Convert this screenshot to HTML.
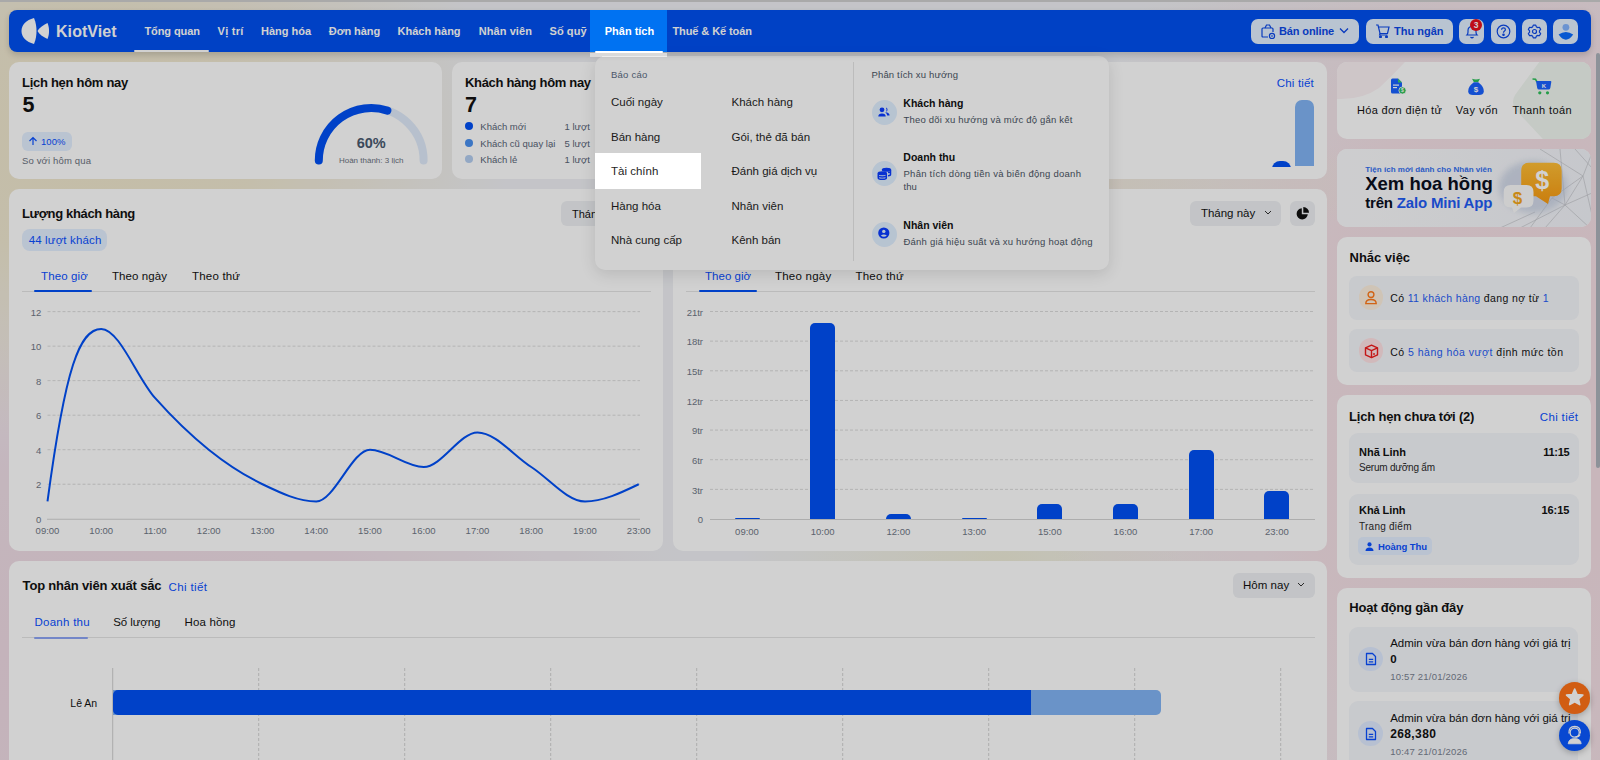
<!DOCTYPE html>
<html><head><meta charset="utf-8"><style>
html,body{margin:0;padding:0;width:1600px;height:760px;overflow:hidden}
body{position:relative;background:radial-gradient(ellipse 300px 60px at 1100px 184px, rgba(240,232,220,0.95) 0%, rgba(240,232,220,0) 100%),radial-gradient(ellipse 420px 300px at 90px 140px, rgba(240,231,205,1) 0%, rgba(240,231,205,0.9) 40%, rgba(240,231,205,0) 100%),radial-gradient(ellipse 650px 420px at 60px 680px, rgba(240,218,228,1) 0%, rgba(240,218,228,0.8) 50%, rgba(240,218,228,0) 100%),radial-gradient(ellipse 520px 700px at 1560px 420px, rgba(245,222,228,1) 0%, rgba(245,222,228,0.85) 50%, rgba(245,222,228,0) 100%),radial-gradient(ellipse 260px 120px at 1000px 560px, rgba(238,236,214,0.9) 0%, rgba(238,236,214,0) 100%),linear-gradient(90deg,#eff0f4,#eff0f4);font-family:"Liberation Sans",sans-serif}
.t{position:absolute;white-space:nowrap;line-height:1}
.top{position:absolute;left:0;top:0;z-index:60}
</style></head><body>
<div style="position:absolute;left:0px;top:0px;width:1600px;height:1.5px;background:#cfcfcf;border-radius:0px;"></div>
<div style="position:absolute;left:9px;top:10px;width:1582px;height:42px;background:#0050f1;border-radius:8px;"></div>
<svg style="position:absolute;left:20px;top:17px" width="30" height="28" viewBox="0 0 30 28"><path d="M14 1 C6 3 1.5 8 1.5 14 C1.5 20 6 25 14 27 C16 22 16.5 18 16.5 14 C16.5 10 16 6 14 1 Z" fill="#fff"/><path d="M27.5 6 C23 8 19 11 17.5 14 C19 17 23 20 27.5 22 C28.8 19 29 16.5 29 14 C29 11.5 28.8 9 27.5 6 Z" fill="#fff"/></svg>
<div class="t" style="left:56px;top:24.16px;font-size:16px;font-weight:700;color:#fff;letter-spacing:0.063px;">KiotViet</div>
<div class="t" style="left:144.5px;top:26.39px;font-size:11px;font-weight:700;color:#fff;letter-spacing:-0.102px;">Tổng quan</div>
<div class="t" style="left:217.5px;top:26.39px;font-size:11px;font-weight:700;color:#fff;letter-spacing:0.289px;">Vị trí</div>
<div class="t" style="left:261px;top:26.39px;font-size:11px;font-weight:700;color:#fff;letter-spacing:-0.004px;">Hàng hóa</div>
<div class="t" style="left:328.8px;top:26.39px;font-size:11px;font-weight:700;color:#fff;letter-spacing:-0.061px;">Đơn hàng</div>
<div class="t" style="left:397.5px;top:26.39px;font-size:11px;font-weight:700;color:#fff;letter-spacing:0.016px;">Khách hàng</div>
<div class="t" style="left:478.8px;top:26.39px;font-size:11px;font-weight:700;color:#fff;letter-spacing:0.065px;">Nhân viên</div>
<div class="t" style="left:549.5px;top:26.39px;font-size:11px;font-weight:700;color:#fff;letter-spacing:0.086px;">Số quỹ</div>
<div class="t" style="left:672.5px;top:26.39px;font-size:11px;font-weight:700;color:#fff;letter-spacing:-0.098px;">Thuế &amp; Kế toán</div>
<div style="position:absolute;left:134px;top:50px;width:75px;height:2px;background:#fff;border-radius:1px;"></div>
<div style="position:absolute;left:9px;top:62px;width:433px;height:117px;background:#ffffff;border-radius:10px;"></div>
<div style="position:absolute;left:452px;top:62px;width:875px;height:117px;background:#ffffff;border-radius:10px;"></div>
<div style="position:absolute;left:9px;top:189px;width:654px;height:362px;background:#ffffff;border-radius:10px;"></div>
<div style="position:absolute;left:673px;top:189px;width:654px;height:362px;background:#ffffff;border-radius:10px;"></div>
<div style="position:absolute;left:9px;top:561px;width:1318px;height:220px;background:#ffffff;border-radius:10px;"></div>
<div style="position:absolute;left:1337px;top:62px;width:254px;height:77px;background:#ffffff;border-radius:10px;"></div>
<div style="position:absolute;left:1337px;top:149px;width:254px;height:78px;background:#ffffff;border-radius:10px;"></div>
<div style="position:absolute;left:1337px;top:237px;width:254px;height:148px;background:#ffffff;border-radius:10px;"></div>
<div style="position:absolute;left:1337px;top:395px;width:254px;height:183px;background:#ffffff;border-radius:10px;"></div>
<div style="position:absolute;left:1337px;top:588px;width:254px;height:200px;background:#ffffff;border-radius:10px;"></div>
<div style="position:absolute;left:1251px;top:19px;width:108px;height:25px;background:#e2efff;border-radius:7px;"></div>
<svg style="position:absolute;left:1260px;top:24px" width="16" height="15" viewBox="0 0 16 15" fill="none" stroke="#0b48e8" stroke-width="1.2"><path d="M5 4 L6.5 1 L9.5 1 L11 4"/><path d="M8 13 H3 Q2 13 2 12 V5 Q2 4 3 4 H12 Q13 4 13 5 V8"/><circle cx="12" cy="12" r="2.6"/><path d="M11 12 h2"/></svg>
<div class="t" style="left:1279px;top:25.99px;font-size:11px;font-weight:700;color:#0b48e8;letter-spacing:-0.126px;">Bán online</div>
<svg style="position:absolute;left:1339px;top:27px" width="10" height="7" viewBox="0 0 10 7" fill="none" stroke="#0b48e8" stroke-width="1.3"><path d="M1 1.5 L5 5.5 L9 1.5"/></svg>
<div style="position:absolute;left:1366px;top:19px;width:87px;height:25px;background:#e2efff;border-radius:7px;"></div>
<svg style="position:absolute;left:1375px;top:24px" width="15" height="14" viewBox="0 0 15 14" fill="none" stroke="#0b48e8" stroke-width="1.2"><path d="M1 1 H3 L5 9.5 H12.5 L14 3 H3.6"/><path d="M5 9.5 L4.6 11 H12.5"/><circle cx="5.5" cy="12.8" r="0.9" fill="#0b48e8"/><circle cx="11.5" cy="12.8" r="0.9" fill="#0b48e8"/></svg>
<div class="t" style="left:1394px;top:25.99px;font-size:11px;font-weight:700;color:#0b48e8;letter-spacing:0.014px;">Thu ngân</div>
<div style="position:absolute;left:1459px;top:19px;width:25px;height:25px;background:#e2efff;border-radius:7px;"></div>
<div style="position:absolute;left:1491px;top:19px;width:25px;height:25px;background:#e2efff;border-radius:7px;"></div>
<div style="position:absolute;left:1522px;top:19px;width:25px;height:25px;background:#e2efff;border-radius:7px;"></div>
<div style="position:absolute;left:1553px;top:19px;width:25px;height:25px;background:#e2efff;border-radius:7px;"></div>
<svg style="position:absolute;left:1465px;top:24px" width="14" height="15" viewBox="0 0 14 15" fill="none" stroke="#0b48e8" stroke-width="1.2"><path d="M2 11 Q3 10 3 8 V6.5 Q3 2.5 7 2.5 Q11 2.5 11 6.5 V8 Q11 10 12 11 Z"/><path d="M5.5 13 Q7 14.5 8.5 13"/></svg>
<div style="position:absolute;left:1470px;top:19px;width:12px;height:12px;background:#e8101c;border-radius:6px;"><div style="position:absolute;left:0;top:1.5px;width:12px;text-align:center;font-size:8.5px;font-weight:700;color:#fff;line-height:9px">3</div></div>
<svg style="position:absolute;left:1496px;top:24px" width="15" height="15" viewBox="0 0 15 15" fill="none" stroke="#0b48e8" stroke-width="1.2"><circle cx="7.5" cy="7.5" r="6.3"/><path d="M5.6 5.8 Q5.6 3.9 7.5 3.9 Q9.4 3.9 9.4 5.6 Q9.4 6.6 8.3 7.2 Q7.5 7.7 7.5 8.8"/><circle cx="7.5" cy="10.8" r="0.7" fill="#0b48e8"/></svg>
<svg style="position:absolute;left:1527px;top:24px" width="15" height="15" viewBox="0 0 15 15" fill="none" stroke="#0b48e8" stroke-width="1.2" stroke-linejoin="round"><path d="M12.45 8.20 L13.65 9.62 L12.41 11.76 L10.58 11.44 L9.37 12.14 L8.74 13.88 L6.26 13.88 L5.63 12.14 L4.42 11.44 L2.59 11.76 L1.35 9.62 L2.55 8.20 L2.55 6.80 L1.35 5.38 L2.59 3.24 L4.42 3.56 L5.63 2.86 L6.26 1.12 L8.74 1.12 L9.37 2.86 L10.58 3.56 L12.41 3.24 L13.65 5.38 L12.45 6.80Z"/><circle cx="7.5" cy="7.5" r="2"/></svg>
<svg style="position:absolute;left:1553px;top:19px" width="25" height="25" viewBox="0 0 25 25"><circle cx="12.9" cy="8.3" r="3.4" fill="#82b4ff"/><path d="M5.6 15.6 Q12.9 10.2 20.2 15.6 Q16.5 20.8 12.9 20.8 Q9.3 20.8 5.6 15.6Z" fill="#0a6cff"/></svg>
<div class="t" style="left:22px;top:76.20px;font-size:13px;font-weight:700;color:#121212;letter-spacing:-0.281px;">Lịch hẹn hôm nay</div>
<div class="t" style="left:22.5px;top:95.10px;font-size:21.5px;font-weight:700;color:#121212;">5</div>
<div style="position:absolute;left:22px;top:132px;width:50px;height:19px;background:#e3efff;border-radius:6px;"></div>
<svg style="position:absolute;left:28px;top:136px" width="10" height="10" viewBox="0 0 10 10" fill="none" stroke="#0a50ff" stroke-width="1.2"><path d="M5 9 V1.5 M1.5 5 L5 1.5 L8.5 5"/></svg>
<div class="t" style="left:41px;top:136.56px;font-size:9.5px;font-weight:400;color:#0a50ff;letter-spacing:0.046px;">100%</div>
<div class="t" style="left:22px;top:155.66px;font-size:9.5px;font-weight:400;color:#6b7280;letter-spacing:0.152px;">So với hôm qua</div>
<svg style="position:absolute;left:0;top:0" width="450" height="180"><path d="M318.80 160.50 A52.4 52.4 0 0 1 423.60 160.50" fill="none" stroke="#e0ebfa" stroke-width="8" stroke-linecap="round"/><path d="M318.80 160.50 A52.4 52.4 0 0 1 387.39 110.66" fill="none" stroke="#0050f5" stroke-width="8" stroke-linecap="round"/></svg>
<div class="t" style="left:71.19999999999999px;width:600px;text-align:center;top:135.93px;font-size:14.5px;font-weight:700;color:#4a5a70;">60%</div>
<div class="t" style="left:71.19999999999999px;width:600px;text-align:center;top:156.93px;font-size:8px;font-weight:400;color:#6b7280;">Hoàn thành: 3 lịch</div>
<div class="t" style="left:465px;top:75.90px;font-size:13px;font-weight:700;color:#121212;letter-spacing:-0.316px;">Khách hàng hôm nay</div>
<div class="t" style="left:465px;top:94.50px;font-size:21.5px;font-weight:700;color:#121212;">7</div>
<div style="position:absolute;left:464.6px;top:122px;width:8px;height:8px;background:#0050f5;border-radius:4px;"></div>
<div class="t" style="left:480.3px;top:121.96px;font-size:9.5px;font-weight:400;color:#596577;">Khách mới</div>
<div class="t" style="right:1010.2px;top:121.96px;font-size:9.5px;font-weight:400;color:#596577;">1 lượt</div>
<div style="position:absolute;left:464.6px;top:138.6px;width:8px;height:8px;background:#4a90f0;border-radius:4px;"></div>
<div class="t" style="left:480.3px;top:138.56px;font-size:9.5px;font-weight:400;color:#596577;">Khách cũ quay lại</div>
<div class="t" style="right:1010.2px;top:138.56px;font-size:9.5px;font-weight:400;color:#596577;">5 lượt</div>
<div style="position:absolute;left:464.6px;top:155.2px;width:8px;height:8px;background:#b4cdf0;border-radius:4px;"></div>
<div class="t" style="left:480.3px;top:155.16px;font-size:9.5px;font-weight:400;color:#596577;">Khách lẻ</div>
<div class="t" style="right:1010.2px;top:155.16px;font-size:9.5px;font-weight:400;color:#596577;">1 lượt</div>
<div class="t" style="right:286px;top:78.47px;font-size:11.5px;font-weight:400;color:#0a50ff;letter-spacing:0.193px;">Chi tiết</div>
<div style="position:absolute;left:1272.3px;top:161px;width:19px;height:8px;background:#0050f5;border-radius:9px 9px 0 0;"></div>
<div style="position:absolute;left:1294.5px;top:99.8px;width:19px;height:66.7px;background:#82b4f4;border-radius:7px 7px 0 0;"></div>
<div style="position:absolute;left:1260px;top:166.5px;width:60px;height:6px;background:#ffffff;border-radius:0px;"></div>
<div class="t" style="left:22px;top:206.70px;font-size:13px;font-weight:700;color:#121212;letter-spacing:-0.335px;">Lượng khách hàng</div>
<div style="position:absolute;left:22px;top:229px;width:85px;height:22px;background:#e3efff;border-radius:8px;"></div>
<div class="t" style="left:28.7px;top:235.17px;font-size:11.5px;font-weight:400;color:#0a50ff;letter-spacing:0.149px;">44 lượt khách</div>
<div class="t" style="left:41px;top:271.17px;font-size:11.5px;font-weight:400;color:#0a50ff;letter-spacing:0.135px;">Theo giờ</div>
<div class="t" style="left:111.9px;top:271.17px;font-size:11.5px;font-weight:400;color:#121212;letter-spacing:0.099px;">Theo ngày</div>
<div class="t" style="left:192.1px;top:271.17px;font-size:11.5px;font-weight:400;color:#121212;letter-spacing:0.178px;">Theo thứ</div>
<div style="position:absolute;left:22px;top:291px;width:629px;height:1px;background:#e4e4e4;border-radius:0px;"></div>
<div style="position:absolute;left:34px;top:290px;width:58px;height:2px;background:#0050f5;border-radius:1px;"></div>
<div style="position:absolute;left:561px;top:201px;width:91px;height:25px;background:#eef0f3;border-radius:6px;"></div>
<div class="t" style="left:572px;top:208.89px;font-size:11px;font-weight:400;color:#121212;">Tháng này</div>
<svg style="position:absolute;left:0;top:0" width="670" height="560"><line x1="47.5" y1="484.23" x2="640" y2="484.23" stroke="#dcdcdc" stroke-width="1" stroke-dasharray="3 2"/><line x1="47.5" y1="449.71" x2="640" y2="449.71" stroke="#dcdcdc" stroke-width="1" stroke-dasharray="3 2"/><line x1="47.5" y1="415.19" x2="640" y2="415.19" stroke="#dcdcdc" stroke-width="1" stroke-dasharray="3 2"/><line x1="47.5" y1="380.67" x2="640" y2="380.67" stroke="#dcdcdc" stroke-width="1" stroke-dasharray="3 2"/><line x1="47.5" y1="346.15" x2="640" y2="346.15" stroke="#dcdcdc" stroke-width="1" stroke-dasharray="3 2"/><line x1="47.5" y1="311.63" x2="640" y2="311.63" stroke="#dcdcdc" stroke-width="1" stroke-dasharray="3 2"/><line x1="47" y1="519.25" x2="640" y2="519.25" stroke="#d4d4d4" stroke-width="1"/><path d="M47.50 501.49 C65.42 367.12 79.75 328.89 101.25 328.89 C119.17 328.89 137.08 377.79 155.00 397.93 C172.92 418.07 190.83 435.33 208.75 449.71 C226.67 464.09 244.58 475.60 262.50 484.23 C280.42 492.86 298.33 501.49 316.25 501.49 C334.17 501.49 352.08 449.71 370.00 449.71 C387.92 449.71 405.83 466.97 423.75 466.97 C441.67 466.97 459.58 432.45 477.50 432.45 C495.42 432.45 513.33 455.46 531.25 466.97 C549.17 478.48 567.08 501.49 585.00 501.49 C602.92 501.49 620.83 492.86 638.75 484.23" fill="none" stroke="#0050f5" stroke-width="2"/></svg>
<div class="t" style="right:1558.8px;top:514.91px;font-size:9.5px;font-weight:400;color:#707886;">0</div>
<div class="t" style="right:1558.8px;top:480.39px;font-size:9.5px;font-weight:400;color:#707886;">2</div>
<div class="t" style="right:1558.8px;top:445.87px;font-size:9.5px;font-weight:400;color:#707886;">4</div>
<div class="t" style="right:1558.8px;top:411.35px;font-size:9.5px;font-weight:400;color:#707886;">6</div>
<div class="t" style="right:1558.8px;top:376.83px;font-size:9.5px;font-weight:400;color:#707886;">8</div>
<div class="t" style="right:1558.8px;top:342.31px;font-size:9.5px;font-weight:400;color:#707886;">10</div>
<div class="t" style="right:1558.8px;top:307.79px;font-size:9.5px;font-weight:400;color:#707886;">12</div>
<div class="t" style="left:-252.5px;width:600px;text-align:center;top:526.46px;font-size:9.5px;font-weight:400;color:#707886;">09:00</div>
<div class="t" style="left:-198.75px;width:600px;text-align:center;top:526.46px;font-size:9.5px;font-weight:400;color:#707886;">10:00</div>
<div class="t" style="left:-145.0px;width:600px;text-align:center;top:526.46px;font-size:9.5px;font-weight:400;color:#707886;">11:00</div>
<div class="t" style="left:-91.25px;width:600px;text-align:center;top:526.46px;font-size:9.5px;font-weight:400;color:#707886;">12:00</div>
<div class="t" style="left:-37.5px;width:600px;text-align:center;top:526.46px;font-size:9.5px;font-weight:400;color:#707886;">13:00</div>
<div class="t" style="left:16.25px;width:600px;text-align:center;top:526.46px;font-size:9.5px;font-weight:400;color:#707886;">14:00</div>
<div class="t" style="left:70.0px;width:600px;text-align:center;top:526.46px;font-size:9.5px;font-weight:400;color:#707886;">15:00</div>
<div class="t" style="left:123.75px;width:600px;text-align:center;top:526.46px;font-size:9.5px;font-weight:400;color:#707886;">16:00</div>
<div class="t" style="left:177.5px;width:600px;text-align:center;top:526.46px;font-size:9.5px;font-weight:400;color:#707886;">17:00</div>
<div class="t" style="left:231.25px;width:600px;text-align:center;top:526.46px;font-size:9.5px;font-weight:400;color:#707886;">18:00</div>
<div class="t" style="left:285.0px;width:600px;text-align:center;top:526.46px;font-size:9.5px;font-weight:400;color:#707886;">19:00</div>
<div class="t" style="left:338.75px;width:600px;text-align:center;top:526.46px;font-size:9.5px;font-weight:400;color:#707886;">23:00</div>
<div style="position:absolute;left:1190px;top:201px;width:91px;height:25px;background:#eef0f3;border-radius:6px;"></div>
<div class="t" style="left:1201px;top:208.47px;font-size:11.5px;font-weight:400;color:#121212;letter-spacing:-0.026px;">Tháng này</div>
<svg style="position:absolute;left:1264px;top:210px" width="8" height="6" viewBox="0 0 8 6" fill="none" stroke="#333" stroke-width="1"><path d="M1 1 L4 4 L7 1"/></svg>
<div style="position:absolute;left:1290px;top:201px;width:25px;height:25px;background:#eef0f3;border-radius:6px;"></div>
<svg style="position:absolute;left:1295px;top:206px" width="15" height="15" viewBox="0 0 15 15"><path d="M6.8 2.2 A5.6 5.6 0 1 0 12.8 8.2 H6.8 Z" fill="#111"/><path d="M8.3 1 A5.6 5.6 0 0 1 14 6.7 H8.3 Z" fill="#111"/></svg>
<div class="t" style="left:705px;top:271.17px;font-size:11.5px;font-weight:400;color:#0a50ff;letter-spacing:0.035px;">Theo giờ</div>
<div class="t" style="left:775px;top:271.17px;font-size:11.5px;font-weight:400;color:#121212;letter-spacing:0.224px;">Theo ngày</div>
<div class="t" style="left:855.5px;top:271.17px;font-size:11.5px;font-weight:400;color:#121212;letter-spacing:0.207px;">Theo thứ</div>
<div style="position:absolute;left:686px;top:291px;width:629px;height:1px;background:#e4e4e4;border-radius:0px;"></div>
<div style="position:absolute;left:698.5px;top:290px;width:58px;height:2px;background:#0050f5;border-radius:1px;"></div>
<svg style="position:absolute;left:0;top:0" width="1340" height="560"><line x1="710" y1="489.36" x2="1315" y2="489.36" stroke="#dcdcdc" stroke-width="1" stroke-dasharray="3 2"/><line x1="710" y1="459.71" x2="1315" y2="459.71" stroke="#dcdcdc" stroke-width="1" stroke-dasharray="3 2"/><line x1="710" y1="430.07" x2="1315" y2="430.07" stroke="#dcdcdc" stroke-width="1" stroke-dasharray="3 2"/><line x1="710" y1="400.43" x2="1315" y2="400.43" stroke="#dcdcdc" stroke-width="1" stroke-dasharray="3 2"/><line x1="710" y1="370.79" x2="1315" y2="370.79" stroke="#dcdcdc" stroke-width="1" stroke-dasharray="3 2"/><line x1="710" y1="341.14" x2="1315" y2="341.14" stroke="#dcdcdc" stroke-width="1" stroke-dasharray="3 2"/><line x1="710" y1="311.50" x2="1315" y2="311.50" stroke="#dcdcdc" stroke-width="1" stroke-dasharray="3 2"/><line x1="710" y1="519.5" x2="1315" y2="519.5" stroke="#d4d4d4" stroke-width="1"/></svg>
<div style="position:absolute;left:734.5px;top:517.8px;width:25px;height:1.5px;background:#0050f5;border-radius:1px 1px 0 0;"></div>
<div style="position:absolute;left:810.2px;top:322.5px;width:25px;height:196.79999999999995px;background:#0050f5;border-radius:5px 5px 0 0;"></div>
<div style="position:absolute;left:885.9px;top:513.5px;width:25px;height:5.7999999999999545px;background:#0050f5;border-radius:5px 5px 0 0;"></div>
<div style="position:absolute;left:961.6px;top:517.8px;width:25px;height:1.5px;background:#0050f5;border-radius:1px 1px 0 0;"></div>
<div style="position:absolute;left:1037.3px;top:504px;width:25px;height:15.299999999999955px;background:#0050f5;border-radius:5px 5px 0 0;"></div>
<div style="position:absolute;left:1113.0px;top:504px;width:25px;height:15.299999999999955px;background:#0050f5;border-radius:5px 5px 0 0;"></div>
<div style="position:absolute;left:1188.7px;top:449.5px;width:25px;height:69.79999999999995px;background:#0050f5;border-radius:5px 5px 0 0;"></div>
<div style="position:absolute;left:1264.4px;top:491px;width:25px;height:28.299999999999955px;background:#0050f5;border-radius:5px 5px 0 0;"></div>
<div class="t" style="right:897px;top:515.16px;font-size:9.5px;font-weight:400;color:#707886;">0</div>
<div class="t" style="right:897px;top:485.52px;font-size:9.5px;font-weight:400;color:#707886;">3tr</div>
<div class="t" style="right:897px;top:455.87px;font-size:9.5px;font-weight:400;color:#707886;">6tr</div>
<div class="t" style="right:897px;top:426.23px;font-size:9.5px;font-weight:400;color:#707886;">9tr</div>
<div class="t" style="right:897px;top:396.59px;font-size:9.5px;font-weight:400;color:#707886;">12tr</div>
<div class="t" style="right:897px;top:366.94px;font-size:9.5px;font-weight:400;color:#707886;">15tr</div>
<div class="t" style="right:897px;top:337.30px;font-size:9.5px;font-weight:400;color:#707886;">18tr</div>
<div class="t" style="right:897px;top:307.66px;font-size:9.5px;font-weight:400;color:#707886;">21tr</div>
<div class="t" style="left:447.0px;width:600px;text-align:center;top:526.66px;font-size:9.5px;font-weight:400;color:#707886;">09:00</div>
<div class="t" style="left:522.7px;width:600px;text-align:center;top:526.66px;font-size:9.5px;font-weight:400;color:#707886;">10:00</div>
<div class="t" style="left:598.4px;width:600px;text-align:center;top:526.66px;font-size:9.5px;font-weight:400;color:#707886;">12:00</div>
<div class="t" style="left:674.1px;width:600px;text-align:center;top:526.66px;font-size:9.5px;font-weight:400;color:#707886;">13:00</div>
<div class="t" style="left:749.8px;width:600px;text-align:center;top:526.66px;font-size:9.5px;font-weight:400;color:#707886;">15:00</div>
<div class="t" style="left:825.5px;width:600px;text-align:center;top:526.66px;font-size:9.5px;font-weight:400;color:#707886;">16:00</div>
<div class="t" style="left:901.2px;width:600px;text-align:center;top:526.66px;font-size:9.5px;font-weight:400;color:#707886;">17:00</div>
<div class="t" style="left:976.9000000000001px;width:600px;text-align:center;top:526.66px;font-size:9.5px;font-weight:400;color:#707886;">23:00</div>
<div class="t" style="left:22.6px;top:578.70px;font-size:13px;font-weight:700;color:#121212;letter-spacing:-0.186px;">Top nhân viên xuất sắc</div>
<div class="t" style="left:168.5px;top:581.97px;font-size:11.5px;font-weight:400;color:#0a50ff;letter-spacing:0.379px;">Chi tiết</div>
<div class="t" style="left:34.5px;top:617.47px;font-size:11.5px;font-weight:400;color:#0a50ff;letter-spacing:0.259px;">Doanh thu</div>
<div class="t" style="left:113.3px;top:617.47px;font-size:11.5px;font-weight:400;color:#121212;letter-spacing:-0.101px;">Số lượng</div>
<div class="t" style="left:184.5px;top:617.47px;font-size:11.5px;font-weight:400;color:#121212;letter-spacing:0.154px;">Hoa hồng</div>
<div style="position:absolute;left:22px;top:637px;width:1293px;height:1px;background:#e4e4e4;border-radius:0px;"></div>
<div style="position:absolute;left:34px;top:636.5px;width:54px;height:2px;background:#8da4f5;border-radius:1px;"></div>
<div style="position:absolute;left:1233px;top:573px;width:81.5px;height:25px;background:#eef0f3;border-radius:6px;"></div>
<div class="t" style="left:1243px;top:580.47px;font-size:11.5px;font-weight:400;color:#121212;letter-spacing:0.020px;">Hôm nay</div>
<svg style="position:absolute;left:1297px;top:582px" width="8" height="6" viewBox="0 0 8 6" fill="none" stroke="#333" stroke-width="1"><path d="M1 1 L4 4 L7 1"/></svg>
<svg style="position:absolute;left:0;top:0" width="1340" height="760"><line x1="112.7" y1="668" x2="112.7" y2="760" stroke="#d0d0d0" stroke-width="1"/><line x1="258.7" y1="668" x2="258.7" y2="760" stroke="#d4d4d4" stroke-width="1" stroke-dasharray="3 2"/><line x1="404.7" y1="668" x2="404.7" y2="760" stroke="#d4d4d4" stroke-width="1" stroke-dasharray="3 2"/><line x1="550.7" y1="668" x2="550.7" y2="760" stroke="#d4d4d4" stroke-width="1" stroke-dasharray="3 2"/><line x1="696.7" y1="668" x2="696.7" y2="760" stroke="#d4d4d4" stroke-width="1" stroke-dasharray="3 2"/><line x1="842.7" y1="668" x2="842.7" y2="760" stroke="#d4d4d4" stroke-width="1" stroke-dasharray="3 2"/><line x1="988.7" y1="668" x2="988.7" y2="760" stroke="#d4d4d4" stroke-width="1" stroke-dasharray="3 2"/><line x1="1134.7" y1="668" x2="1134.7" y2="760" stroke="#d4d4d4" stroke-width="1" stroke-dasharray="3 2"/><line x1="1280.7" y1="668" x2="1280.7" y2="760" stroke="#d4d4d4" stroke-width="1" stroke-dasharray="3 2"/></svg>
<div class="t" style="right:1502.8px;top:697.61px;font-size:10.5px;font-weight:400;color:#121212;">Lê An</div>
<div style="position:absolute;left:113px;top:690.3px;width:1048px;height:25px;background:#82b4f4;border-radius:0 5px 5px 0;"></div>
<div style="position:absolute;left:113px;top:690.3px;width:918px;height:25px;background:#0050f5;border-radius:5px 0 0 5px;"></div>
<div style="position:absolute;left:595px;top:56px;width:514px;height:214px;background:#ffffff;border-radius:10px;box-shadow:0 4px 16px rgba(0,0,0,0.12)"></div>
<div class="t" style="left:611px;top:70.46px;font-size:9.5px;font-weight:400;color:#5b6b82;letter-spacing:0.229px;">Báo cáo</div>
<div class="t" style="left:611px;top:97.37px;font-size:11.5px;font-weight:400;color:#1f1f1f;">Cuối ngày</div>
<div class="t" style="left:731.5px;top:97.37px;font-size:11.5px;font-weight:400;color:#1f1f1f;">Khách hàng</div>
<div class="t" style="left:611px;top:131.77px;font-size:11.5px;font-weight:400;color:#1f1f1f;">Bán hàng</div>
<div class="t" style="left:731.5px;top:131.77px;font-size:11.5px;font-weight:400;color:#1f1f1f;">Gói, thẻ đã bán</div>
<div class="t" style="left:731.5px;top:166.17px;font-size:11.5px;font-weight:400;color:#1f1f1f;">Đánh giá dịch vụ</div>
<div class="t" style="left:611px;top:200.57px;font-size:11.5px;font-weight:400;color:#1f1f1f;">Hàng hóa</div>
<div class="t" style="left:731.5px;top:200.57px;font-size:11.5px;font-weight:400;color:#1f1f1f;">Nhân viên</div>
<div class="t" style="left:611px;top:234.97px;font-size:11.5px;font-weight:400;color:#1f1f1f;">Nhà cung cấp</div>
<div class="t" style="left:731.5px;top:234.97px;font-size:11.5px;font-weight:400;color:#1f1f1f;">Kênh bán</div>
<div style="position:absolute;left:852.5px;top:62px;width:1px;height:199px;background:#e6e6e6;border-radius:0px;"></div>
<div class="t" style="left:871.5px;top:69.96px;font-size:9.5px;font-weight:400;color:#4b5565;letter-spacing:0.156px;">Phân tích xu hướng</div>
<div style="position:absolute;left:872px;top:100.1px;width:24.8px;height:24.8px;background:#e0efff;border-radius:12.4px;"></div>
<div class="t" style="left:903.3px;top:97.81px;font-size:10.5px;font-weight:700;color:#121212;">Khách hàng</div>
<div class="t" style="left:903.5px;top:115.06px;font-size:9.5px;font-weight:400;color:#4b5565;letter-spacing:0.202px;">Theo dõi xu hướng và mức độ gắn kết</div>
<div style="position:absolute;left:872px;top:160.9px;width:24.8px;height:24.8px;background:#e0efff;border-radius:12.4px;"></div>
<div class="t" style="left:903.3px;top:151.81px;font-size:10.5px;font-weight:700;color:#121212;">Doanh thu</div>
<div class="t" style="left:903.5px;top:169.06px;font-size:9.5px;font-weight:400;color:#4b5565;letter-spacing:0.256px;">Phân tích dòng tiền và biến động doanh</div>
<div class="t" style="left:903.5px;top:181.86px;font-size:9.5px;font-weight:400;color:#4b5565;">thu</div>
<div style="position:absolute;left:872px;top:222.4px;width:24.8px;height:24.8px;background:#e0efff;border-radius:12.4px;"></div>
<div class="t" style="left:903.3px;top:219.61px;font-size:10.5px;font-weight:700;color:#121212;">Nhân viên</div>
<div class="t" style="left:903.5px;top:236.86px;font-size:9.5px;font-weight:400;color:#4b5565;letter-spacing:0.215px;">Đánh giá hiệu suất và xu hướng hoạt động</div>
<svg style="position:absolute;left:872px;top:100px" width="25" height="25" viewBox="0 0 25 25" fill="#0a3cff"><circle cx="10" cy="9.8" r="2.4"/><path d="M6.3 16.6 Q6.3 13.6 10 13.6 Q13.7 13.6 13.7 16.6 Z"/><path d="M14 7.6 A2.2 2.2 0 0 1 14 11.8 Q15 9.7 14 7.6Z"/><path d="M13.2 12.3 Q17.6 12.6 17.6 15.6 H15.2 Q15 13.6 13.2 12.3Z"/></svg>
<svg style="position:absolute;left:872px;top:161px" width="25" height="25" viewBox="0 0 25 25" fill="none" stroke="#0a3cff" stroke-width="1.5"><ellipse cx="14.5" cy="8.8" rx="4" ry="1.3" fill="#0a3cff"/><path d="M18.5 9 V13.5 Q18.5 14.6 16 14.8"/><path d="M16 11.6 Q18 11.4 18.5 11"/><ellipse cx="10.3" cy="12.2" rx="4" ry="1.3" fill="#0a3cff"/><path d="M6.3 12.4 V17 Q6.3 18.3 10.3 18.3 Q14.3 18.3 14.3 17 V12.4"/><path d="M6.3 14.8 Q6.3 15.9 10.3 15.9 Q14.3 15.9 14.3 14.8"/></svg>
<svg style="position:absolute;left:872px;top:221px" width="25" height="25" viewBox="0 0 25 25"><circle cx="11.8" cy="12" r="5.6" fill="#0a3cff"/><circle cx="11.8" cy="10.4" r="1.7" fill="#e0efff"/><path d="M8.8 14.6 Q11.8 12.4 14.8 14.6 Q13.5 15.8 11.8 15.8 Q10.1 15.8 8.8 14.6Z" fill="#e0efff"/></svg>
<svg style="position:absolute;left:1337px;top:62px" width="254" height="77" viewBox="0 0 254 77"><defs><clipPath id="c1"><rect x="0" y="0" width="254" height="77" rx="10"/></clipPath></defs><g clip-path="url(#c1)"><path d="M0 0 H68 Q55 14 42 26 Q25 38 0 37 Z" fill="#fcf2f5"/><path d="M206 0 H254 V77 H210 L181 46 Q177 40 181 34 Z" fill="#f1f7f1" stroke="#f1f7f1" stroke-width="6" stroke-linejoin="round"/></g></svg>
<svg style="position:absolute;left:1390px;top:78px" width="17" height="17" viewBox="0 0 17 17"><path d="M1 2 Q1 0.5 2.5 0.5 H8 L12 4.5 V14 Q12 15.5 10.5 15.5 H2.5 Q1 15.5 1 14 Z" fill="#1a62ff"/><path d="M8 0.5 V4.5 H12 Z" fill="#3ad06a"/><rect x="3" y="6.5" width="6" height="1.2" fill="#fff"/><rect x="3" y="9" width="4" height="1.2" fill="#fff"/><circle cx="12.5" cy="12.5" r="3.6" fill="#2ec05a" stroke="#fff" stroke-width="0.8"/><text x="12.5" y="14.3" font-size="5" text-anchor="middle" fill="#fff" font-family="Liberation Sans" font-weight="700">$</text></svg>
<svg style="position:absolute;left:1467px;top:78px" width="18" height="18" viewBox="0 0 18 18"><path d="M5 0.8 Q9 2.4 13 0.8 L11.2 4 H6.8 Z" fill="#2ec05a"/><path d="M6.8 4.2 H11.2 Q17.5 9 16.8 13.8 Q16.3 17 12 17 H6 Q1.7 17 1.2 13.8 Q0.5 9 6.8 4.2Z" fill="#1a62ff"/><text x="9" y="13.6" font-size="8" text-anchor="middle" fill="#fff" font-family="Liberation Sans" font-weight="700">$</text></svg>
<svg style="position:absolute;left:1532px;top:78px" width="20" height="17" viewBox="0 0 20 17"><path d="M0.5 1 L3.5 1.2 L5 4" stroke="#2ec05a" stroke-width="1.6" fill="none"/><path d="M4 3 H18.5 Q19.5 3 19.3 4 L18.3 10 Q18 11.5 16.5 11.5 H7 Q5.5 11.5 5.2 10 Z" fill="#1a62ff"/><text x="12" y="9.5" font-size="6" text-anchor="middle" fill="#fff" font-family="Liberation Sans" font-weight="700">K</text><circle cx="7.8" cy="14.8" r="1.6" fill="#2ec05a"/><circle cx="15.5" cy="14.8" r="1.6" fill="#2ec05a"/></svg>
<div class="t" style="left:1357px;top:105.19px;font-size:11px;font-weight:400;color:#121212;letter-spacing:0.342px;">Hóa đơn điện tử</div>
<div class="t" style="left:1455.8px;top:105.19px;font-size:11px;font-weight:400;color:#121212;letter-spacing:0.477px;">Vay vốn</div>
<div class="t" style="left:1512.4px;top:105.19px;font-size:11px;font-weight:400;color:#121212;letter-spacing:0.405px;">Thanh toán</div>
<div style="position:absolute;left:1337px;top:149px;width:254px;height:78px;background:linear-gradient(90deg,#fbfbfd,#f2f4f9);border-radius:10px;overflow:hidden"><svg style="position:absolute;left:0;top:0" width="254" height="78"><g stroke="#c4c6cc" stroke-width="0.7" fill="none"><line x1="203" y1="0" x2="246" y2="27"/><line x1="255" y1="4" x2="246" y2="27"/><line x1="246" y1="27" x2="255" y2="66"/><line x1="246" y1="27" x2="228" y2="56"/><line x1="223" y1="0" x2="228" y2="56"/><line x1="228" y1="56" x2="255" y2="44"/><line x1="228" y1="56" x2="208" y2="79"/><line x1="228" y1="56" x2="253" y2="79"/><line x1="183" y1="79" x2="228" y2="56"/><line x1="246" y1="27" x2="215" y2="49"/><line x1="163" y1="79" x2="198" y2="63"/><line x1="238" y1="0" x2="255" y2="19"/><line x1="215" y1="49" x2="228" y2="56"/><line x1="215" y1="49" x2="193" y2="79"/></g><defs><linearGradient id="og" x1="0" y1="0" x2="0" y2="1"><stop offset="0" stop-color="#ffbe36"/><stop offset="1" stop-color="#f79a12"/></linearGradient><filter id="bs" x="-50%" y="-50%" width="200%" height="200%"><feGaussianBlur stdDeviation="3"/></filter></defs><ellipse cx="196" cy="38" rx="34" ry="26" fill="#b8c4dc" opacity="0.55" filter="url(#bs)"/><path d="M192 13.8 H216.7 Q224.7 13.8 224.7 21.8 V39.2 Q224.7 47.2 216.7 47.2 H213 L211 55 L199 47.2 H192 Q184.2 47.2 184.2 39.2 V21.8 Q184.2 13.8 192 13.8Z" fill="url(#og)"/><text x="205.2" y="40.2" font-size="25" text-anchor="middle" fill="#fff" font-family="Liberation Sans" font-weight="700">$</text><path d="M173.7 35.9 H189.5 Q196.5 35.9 196.5 42.9 V51.5 Q196.5 58.5 189.5 58.5 H184 L177 64 L175 58.5 H173.7 Q166.7 58.5 166.7 51.5 V42.9 Q166.7 35.9 173.7 35.9Z" fill="#fbfbfb"/><text x="180.6" y="54.5" font-size="17" text-anchor="middle" fill="#f5a81c" font-family="Liberation Sans" font-weight="700">$</text></svg></div>
<div class="t" style="left:1365.2px;top:166.43px;font-size:8px;font-weight:700;color:#3470f0;letter-spacing:0.041px;">Tiện ích mới dành cho Nhân viên</div>
<div class="t" style="left:1365.2px;top:175.24px;font-size:18.5px;font-weight:700;color:#0a0f1e;letter-spacing:0.009px;">Xem hoa hồng</div>
<div class="t" style="left:1365.2px;top:194.70px;font-size:15px;font-weight:700;color:#0a0f1e;letter-spacing:-0.181px;">trên <span style="color:#1f5cf5">Zalo Mini App</span></div>
<div class="t" style="left:1349.5px;top:251.30px;font-size:13px;font-weight:700;color:#121212;letter-spacing:-0.013px;">Nhắc việc</div>
<div style="position:absolute;left:1349.3px;top:276.1px;width:230px;height:44px;background:#f5f7fb;border-radius:8px;"></div>
<div style="position:absolute;left:1349.3px;top:329.4px;width:230px;height:43px;background:#f5f7fb;border-radius:8px;"></div>
<div style="position:absolute;left:1358.5px;top:285.2px;width:24.6px;height:24.6px;background:#fdf0de;border-radius:12.3px;"></div>
<div style="position:absolute;left:1358.5px;top:338.4px;width:24.6px;height:24.6px;background:#ffe2e4;border-radius:12.3px;"></div>
<svg style="position:absolute;left:1364px;top:290px" width="14" height="15" viewBox="0 0 14 15" fill="none" stroke="#ff7a1a" stroke-width="1.4"><circle cx="7" cy="4.6" r="2.9"/><path d="M1.8 13.6 Q1.8 9.5 7 9.5 Q12.2 9.5 12.2 13.6 Z"/></svg>
<svg style="position:absolute;left:1363.5px;top:343.5px" width="15" height="15" viewBox="0 0 15 15" fill="none" stroke="#f01c1c" stroke-width="1.4" stroke-linejoin="round"><path d="M7.5 1.2 L13.5 3.8 V10.8 L7.5 13.6 L1.5 10.8 V3.8 Z"/><path d="M1.5 3.8 L7.5 6.6 L13.5 3.8 M7.5 6.6 V13.6"/><path d="M10 9 V11" /></svg>
<div class="t" style="left:1390.2px;top:293.41px;font-size:10.5px;font-weight:400;color:#121212;letter-spacing:0.369px;">Có <span style="color:#1f5cf5">11 khách hàng</span> đang nợ từ <span style="color:#1f5cf5">1</span></div>
<div class="t" style="left:1390.2px;top:346.61px;font-size:10.5px;font-weight:400;color:#121212;letter-spacing:0.490px;">Có <span style="color:#1f5cf5">5 hàng hóa vượt</span> định mức tồn</div>
<div class="t" style="left:1349px;top:410.00px;font-size:13px;font-weight:700;color:#121212;letter-spacing:-0.189px;">Lịch hẹn chưa tới (2)</div>
<div class="t" style="right:21.700000000000045px;top:412.27px;font-size:11.5px;font-weight:400;color:#0a50ff;letter-spacing:0.336px;">Chi tiết</div>
<div style="position:absolute;left:1349px;top:433.1px;width:230.4px;height:50.1px;background:#f5f7fb;border-radius:9px;"></div>
<div style="position:absolute;left:1349px;top:493.5px;width:230.4px;height:71.4px;background:#f5f7fb;border-radius:9px;"></div>
<div class="t" style="left:1359px;top:446.69px;font-size:11px;font-weight:700;color:#121212;letter-spacing:-0.009px;">Nhã Linh</div>
<div class="t" style="right:30.700000000000045px;top:446.69px;font-size:11px;font-weight:700;color:#121212;letter-spacing:-0.283px;">11:15</div>
<div class="t" style="left:1359px;top:463.34px;font-size:10px;font-weight:400;color:#2a2a2a;letter-spacing:-0.219px;">Serum dưỡng ẩm</div>
<div class="t" style="left:1359px;top:505.49px;font-size:11px;font-weight:700;color:#121212;letter-spacing:-0.066px;">Khả Linh</div>
<div class="t" style="right:30.700000000000045px;top:505.49px;font-size:11px;font-weight:700;color:#121212;letter-spacing:-0.060px;">16:15</div>
<div class="t" style="left:1359px;top:522.44px;font-size:10px;font-weight:400;color:#2a2a2a;letter-spacing:0.253px;">Trang điểm</div>
<div style="position:absolute;left:1358.3px;top:536.9px;width:74px;height:18.6px;background:#e3eeff;border-radius:5px;"></div>
<svg style="position:absolute;left:1365px;top:541.5px" width="9" height="9" viewBox="0 0 9 9" fill="#0a50ff"><circle cx="4.5" cy="2.4" r="2.1"/><path d="M0.5 9 Q0.5 5.4 4.5 5.4 Q8.5 5.4 8.5 9Z"/></svg>
<div class="t" style="left:1378px;top:542.06px;font-size:9.5px;font-weight:700;color:#0a50ff;letter-spacing:-0.070px;">Hoàng Thu</div>
<div class="t" style="left:1349.2px;top:601.30px;font-size:13px;font-weight:700;color:#121212;letter-spacing:-0.175px;">Hoạt động gần đây</div>
<div style="position:absolute;left:1349.2px;top:626.5px;width:229.3px;height:65px;background:#f5f7fb;border-radius:9px;"></div>
<div style="position:absolute;left:1349.2px;top:701.4px;width:229.3px;height:80px;background:#f5f7fb;border-radius:9px;"></div>
<div style="position:absolute;left:1358.4px;top:647.0px;width:24.4px;height:24.4px;background:#e0ebff;border-radius:12.2px;"></div>
<svg style="position:absolute;left:1365px;top:652.2px" width="12" height="14" viewBox="0 0 12 14" fill="none" stroke="#0a50ff" stroke-width="1.3" stroke-linejoin="round"><path d="M1.5 1.5 H7.5 L10.5 4.5 V12.5 H1.5 Z"/><path d="M3.8 7.3 H8.2 M3.8 9.8 H8.2"/></svg>
<div style="position:absolute;left:1358.4px;top:721.4px;width:24.4px;height:24.4px;background:#e0ebff;border-radius:12.2px;"></div>
<svg style="position:absolute;left:1365px;top:726.6px" width="12" height="14" viewBox="0 0 12 14" fill="none" stroke="#0a50ff" stroke-width="1.3" stroke-linejoin="round"><path d="M1.5 1.5 H7.5 L10.5 4.5 V12.5 H1.5 Z"/><path d="M3.8 7.3 H8.2 M3.8 9.8 H8.2"/></svg>
<div class="t" style="left:1390.2px;top:638.17px;font-size:11.5px;font-weight:400;color:#121212;letter-spacing:-0.013px;">Admin vừa bán đơn hàng với giá trị</div>
<div class="t" style="left:1390.2px;top:653.57px;font-size:11.5px;font-weight:700;color:#121212;">0</div>
<div class="t" style="left:1390.2px;top:671.66px;font-size:9.5px;font-weight:400;color:#7a8290;letter-spacing:0.205px;">10:57 21/01/2026</div>
<div class="t" style="left:1390.2px;top:713.07px;font-size:11.5px;font-weight:400;color:#121212;letter-spacing:-0.013px;">Admin vừa bán đơn hàng với giá trị</div>
<div class="t" style="left:1390.2px;top:728.04px;font-size:12px;font-weight:700;color:#121212;letter-spacing:0.385px;">268,380</div>
<div class="t" style="left:1390.2px;top:747.06px;font-size:9.5px;font-weight:400;color:#7a8290;letter-spacing:0.205px;">10:47 21/01/2026</div>
<div style="position:absolute;left:1559.1px;top:682.3px;width:31.4px;height:31.4px;background:#ff7218;border-radius:15.7px;box-shadow:0 2px 6px rgba(0,0,0,0.25)"><svg style="position:absolute;left:0;top:0" width="31.4" height="31.4" viewBox="0 0 31.4 31.4"><path d="M15.70 7.10 L18.05 12.46 L23.88 13.04 L19.50 16.94 L20.75 22.66 L15.70 19.70 L10.65 22.66 L11.90 16.94 L7.52 13.04 L13.35 12.46Z" fill="#fff" stroke="#fff" stroke-width="1.6" stroke-linejoin="round"/></svg></div>
<div style="position:absolute;left:1559.1px;top:719.7px;width:31.4px;height:31.4px;background:#0a58ff;border-radius:15.7px;box-shadow:0 2px 6px rgba(0,0,0,0.25)"><svg style="position:absolute;left:0;top:0" width="31.4" height="31.4" viewBox="0 0 31.4 31.4" fill="none" stroke="#fff" stroke-width="1.3"><circle cx="15.7" cy="12.6" r="4.6"/><path d="M10 13.5 Q9.6 6.4 15.7 6.4 Q21.8 6.4 21.4 13.5"/><path d="M21 14.5 Q20 17 16.5 17"/><path d="M9.2 23.8 Q9.6 18.6 15.7 18.6 Q21.8 18.6 22.2 23.8 Z" fill="#fff" stroke-width="0.8"/></svg></div>
<div style="position:absolute;left:9px;top:10px;width:1582px;height:42px;background:transparent;border-radius:8px;box-shadow:0 3px 6px rgba(0,0,0,0.16)"></div>
<div style="position:absolute;left:1596px;top:52.5px;width:4px;height:415px;background:#adb3bb;border-radius:2px"></div>
<div style="position:absolute;left:0;top:0;width:1600px;height:760px;background:rgba(0,0,0,0.18);z-index:50"></div>
<div class="top">
<div style="position:absolute;left:589.5px;top:52.9px;width:77px;height:4.2px;background:#dadada;border-radius:0px;"></div>
<div style="position:absolute;left:602px;top:56px;width:64.5px;height:1px;background:#ececec;border-radius:0px;"></div>
<div style="position:absolute;left:594.5px;top:153px;width:106.7px;height:35.8px;background:#ffffff;border-radius:0px;"></div>
<div class="t" style="left:611px;top:166.17px;font-size:11.5px;font-weight:400;color:#1f1f1f;">Tài chính</div>
<div style="position:absolute;left:589.5px;top:10px;width:77px;height:42px;background:#0072f2;border-radius:0px;"></div>
<div class="t" style="left:604.8px;top:26.19px;font-size:11px;font-weight:700;color:#fff;letter-spacing:-0.014px;">Phân tích</div>
<div style="position:absolute;left:595px;top:50.6px;width:67.7px;height:2.3px;background:#fff;border-radius:1px;"></div>
</div>
</body></html>
